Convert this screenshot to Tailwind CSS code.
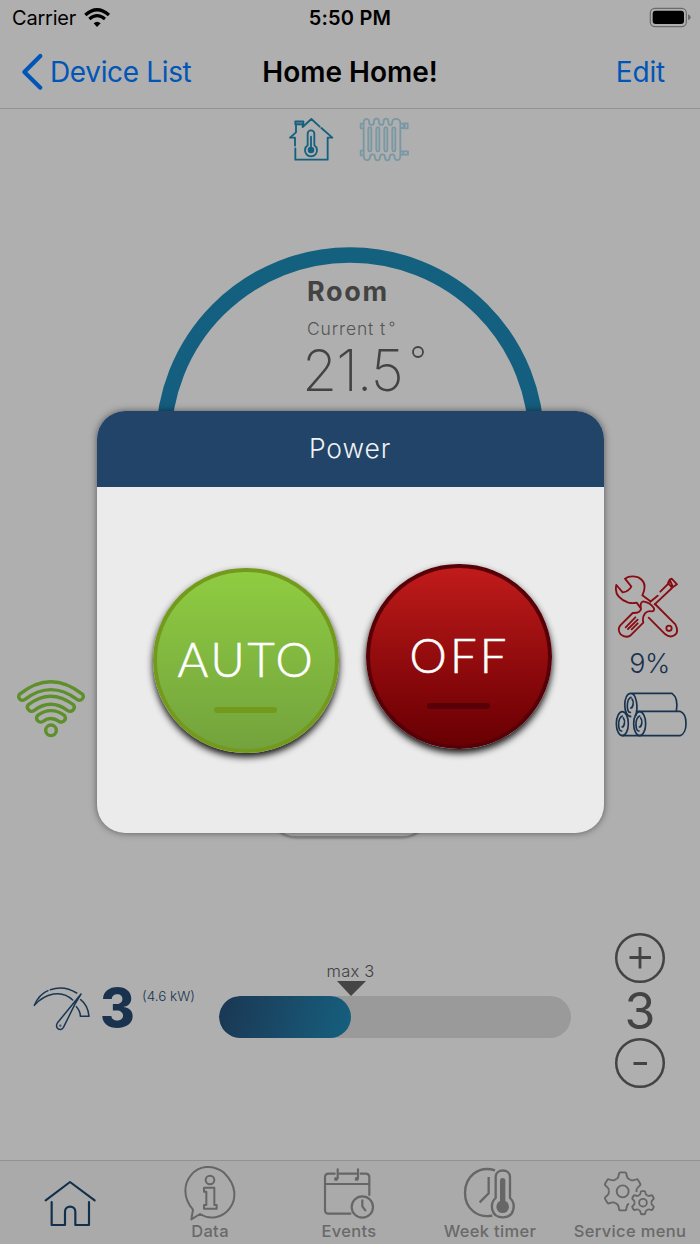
<!DOCTYPE html>
<html lang="en">
<head>
<meta charset="utf-8">
<title>Home Home!</title>
<script src="https://cdn.jsdelivr.net/npm/@tailwindcss/browser@4"></script>
</head>
<body class="bg-[#afafaf]">
<div class="relative flex h-[1244px] w-[700px] flex-col overflow-hidden bg-[#afafaf] font-['Inter',sans-serif] whitespace-nowrap">
  <header class="h-[109px] shrink-0 border-b border-[#929292] text-black">
    <div class="grid h-9 grid-cols-3 items-center">
      <div class="flex items-center pl-3 text-[20px] tracking-[-0.2px]"><span>Carrier</span>
        <svg class="-mt-0.5 ml-2" width="26" height="20" viewBox="252 18 78 60" fill="none" stroke="#000"><path d="M256 42Q291 11 327 42" stroke-width="10"/><path d="M268 54Q291 34 315 54" stroke-width="9"/><path d="M281 67Q291 57 302 67L291 78Z" fill="#000" stroke="none"/></svg>
      </div>
      <div class="text-center text-[20px] font-semibold tracking-[0.2px]">5:50 PM</div>
      <div class="flex justify-end pr-[9px]"><svg class="-mt-0.5" width="42" height="21" viewBox="897 20 126 63"><rect x="901" y="24" width="108" height="55" rx="14" fill="none" stroke="#6a6a6a" stroke-width="3.5"/><rect x="908" y="31" width="94" height="40" rx="9"/><path d="M1014 42Q1022 45 1022 51T1014 60Z" fill="#6a6a6a"/></svg></div>
    </div>
    <div class="grid h-[72px] grid-cols-3 items-center text-[28px]">
      <div class="flex items-center pl-[21px] text-[#0055b7]"><svg width="23" height="38" viewBox="63 158 69 114" fill="none" stroke="#0055b7" stroke-width="12.5" stroke-linecap="round" stroke-linejoin="round"><path d="M121 167L73 215L121 262"/></svg><span class="ml-[6px] tracking-[-0.35px]">Device List</span></div>
      <div class="text-center font-semibold tracking-[0px]">Home Home!</div>
      <div class="pr-[35px] text-right tracking-[-0.2px] text-[#0055b7]">Edit</div>
    </div>
  </header>

  <main class="h-[1051px] shrink-0">
    <div class="flex h-[138px] pt-1 pl-[284px]">
      <svg width="54" height="54" viewBox="42 24 162 162" fill="none" stroke="#14607f" stroke-width="5.5" stroke-linecap="round" stroke-linejoin="round"><path d="M149 65L124 42L98 66M154 69L187 98H173V164H76V130M75 122V98H60L78 82V58M98 66V58"/><path d="M76 49H100V58H76Z" fill="#5d8796"/><path d="M113 121V86a10 10 0 0 1 20 0V121a18 18 0 1 1-20 0Z"/><circle cx="123" cy="135" r="10" fill="#14607f" stroke="none"/><path d="M123 95V134"/></svg>
      <svg class="ml-[18px]" width="56" height="54" viewBox="258 24 168 162" fill="none" stroke="#7998a3" stroke-width="5.5" stroke-linejoin="round"><path d="M281 152V55C281 38 297 38 297 50C297 63 312 63 312 50C312 38 327 38 327 50C327 63 341 63 341 50C341 38 355 38 355 50C355 63 367 63 367 50C367 38 391 38 391 55V152C391 169 374 169 374 157C374 145 359 145 359 157C359 169 345 169 345 157C345 145 330 145 330 157C330 169 315 169 315 157C315 145 300 145 300 157C300 169 281 169 281 152Z"/><rect x="295" y="67" width="9" height="72" rx="4"/><rect x="319" y="67" width="9" height="72" rx="4"/><rect x="343" y="67" width="9" height="72" rx="4"/><rect x="367" y="67" width="9" height="72" rx="4"/><path d="M281 56H272V70H281M281 137H272V151H281M391 56H401V69H391M404 55H413V70H404ZM391 139H400V149H391M400 139H414V149H400Z"/></svg>
    </div>
    <div class="relative mx-auto h-[327px] w-[390px]">
      <svg class="absolute inset-0" width="390" height="327" viewBox="0 0 390 327"><defs><linearGradient id="ring" x1="0" y1="0" x2="0" y2="1"><stop offset="0" stop-color="#14607f"/><stop offset=".35" stop-color="#145f80"/><stop offset="1" stop-color="#173b58"/></linearGradient></defs><circle cx="195" cy="194.5" r="186.5" fill="none" stroke="url(#ring)" stroke-width="15.5"/></svg>
      <div class="relative flex flex-col pt-[28px] pl-[152px] text-[#434343]">
        <div class="h-[34px] text-[27px] leading-[34px] font-bold tracking-[1.7px]">Room</div>
        <div class="mt-[8px] flex h-6 text-[17.5px] leading-6 font-light tracking-[0.85px] text-[#555]">Current t<svg class="mt-1 ml-[3px]" width="6" height="6" viewBox="0 0 6 6"><circle cx="3" cy="3" r="2" fill="none" stroke="#555"/></svg></div>
        <div class="-ml-[5px] flex h-[60px] text-[57px] leading-[60px] font-extralight"><span class="w-[98px] tracking-[-1px]">21.5</span><svg class="mt-[4px] ml-[11px]" width="14" height="14" viewBox="0 0 14 14"><circle cx="7" cy="7" r="5" fill="none" stroke="#434343" stroke-width="1.8"/></svg></div>
      </div>
    </div>
    <div class="flex h-[208px] justify-between pr-[11px] pl-[14px]">
      <svg class="mt-[101px]" width="74" height="66" viewBox="42 15 222 198" fill="none" stroke="#5d8f2b" stroke-width="10"><path d="M58 73Q152 -3 248 73C254 83 243 96 231 88Q152 30 75 88C63 96 52 84 58 73Z"/><path d="M85 104Q152 53 220 104C229 115 215 130 202 121Q152 85 103 121C91 130 76 115 85 104Z"/><path d="M113 136Q153 108 193 136C203 149 187 161 177 154Q152 137 129 154C118 161 103 149 113 136Z"/><circle cx="153" cy="181" r="16"/></svg>
      <div class="flex w-[75px] flex-col items-center text-[#19334f]">
        <svg class="-ml-[6px]" width="75" height="64" viewBox="33 27 225 192" fill="none" stroke="#880d13" stroke-width="5.5" stroke-linecap="round" stroke-linejoin="round"><path d="M121 128L110 113Q99 116 85 113Q40 96 49 60L68 82Q86 80 94 65L75 41Q90 30 115 37Q145 53 127 91L151 109M165 117L226 178Q238 202 223 211Q210 219 196 208L146 158"/><circle cx="207" cy="190" r="8"/><path d="M151 110L173 92M164 118L216 69M181 80L207 54M204 54L209 44L215 41L231 58L216 68ZM209 44L217 62M130 109Q152 113 162 130Q164 139 154 139Q143 136 135 145Q126 157 130 173L91 212Q76 220 62 208Q51 193 61 181L98 144Q120 145 123 132Q119 111 130 109ZM77 187L106 157M84 192L113 164M95 193L113 175"/></svg>
        <div class="mt-[9px] -ml-[4px] h-[34px] text-[27px] leading-[34px] font-light tracking-[-0.5px]">9%</div>
        <svg class="mt-[10px]" width="75" height="48" viewBox="42 381 225 144" fill="none" stroke="#19334f" stroke-width="5"><path d="M92 388H216Q236 402 229 442M107 442H240C264 450 264 508 240 515H66M107 456C115 430 110 388 92 388C69 388 67 458 94 458"/><ellipse cx="67" cy="479" rx="18" ry="36"/><ellipse cx="119" cy="479" rx="18" ry="36"/><path d="M67 456C52 462 53 503 65 501M70 462C77 470 73 489 66 489M119 456C104 462 105 503 117 501M122 462C129 470 125 489 118 489M93 400C78 406 79 447 91 445M96 405C103 413 99 432 92 432" stroke-linecap="round"/></svg>
      </div>
    </div>
    <div class="h-[141px]"><div class="ml-[268px] h-[56px] w-[162px] rounded-[28px] border-2 border-[#858585] bg-[#afafaf] shadow-[0_1px_2px_#888]"></div></div>
    <div class="flex h-[170px] pt-[9px] pl-[30px]">
      <svg class="mt-[53px]" width="64" height="50" viewBox="30 105 192 150" fill="none" stroke="#193753" stroke-width="4.5" stroke-linecap="round" stroke-linejoin="round"><path d="M43 166C52 145 66 129 84 122M91 119C117 110 145 113 170 129M43 166C75 130 125 117 158 150M183 132L112 219C104 235 121 246 130 233L164 164L183 132M182 149Q204 166 207 199H181Q181 182 169 170"/><circle cx="121" cy="227" r="1"/></svg>
      <div class="mt-[46px] ml-[6px] w-[35px] text-[53px] leading-[60px] font-extrabold text-[#19334f]">3</div>
      <div class="mt-[54px] ml-[7px] w-[60px] text-[13.5px] leading-5 font-light text-[#19334f]">(4.6 kW)</div>
      <div class="ml-[17px] w-[352px]">
        <div class="flex h-[64px] flex-col items-center pr-[89px] text-[16.5px] font-light text-[#404040]"><div class="mt-[29px] h-[20px] leading-[20px] tracking-[0.2px]">max 3</div><svg width="30" height="15" viewBox="0 0 30 15"><path d="M1 0H30L15 15Z" fill="#454545"/></svg></div>
        <div class="h-[42px] overflow-hidden rounded-[21px] bg-[#9a9a9a]"><div class="h-full w-[132px] rounded-[21px] bg-linear-105 from-[#193753] to-[#14607f]"></div></div>
      </div>
      <div class="ml-[43px] flex w-[52px] flex-col items-center text-[#434343]">
        <svg width="52" height="52" viewBox="0 0 52 52" fill="none" stroke="#434343" stroke-width="2.5"><circle cx="26" cy="26" r="23.8"/><path d="M15.5 25.5H37M26 15V36.5" stroke-width="2.8"/></svg>
        <div class="h-[53px] text-[50px] leading-[54px] font-normal">3</div>
        <svg width="52" height="52" viewBox="0 0 52 52" fill="none" stroke="#434343" stroke-width="2.5"><circle cx="26" cy="26" r="23.8"/><path d="M19.5 26.5H33" stroke-width="3"/></svg>
      </div>
    </div>
  </main>

  <nav class="grid h-[84px] shrink-0 grid-cols-5 border-t border-[#929292] bg-[#aaaaaa] text-center text-[16.5px] leading-5 font-medium tracking-[0.35px] text-[#696969]">
    <div><svg width="140" height="83" viewBox="0 32 420 249" fill="none" stroke="#12304c" stroke-width="6.5" stroke-linecap="round" stroke-linejoin="round"><path d="M137 150L210 95L284 150M155 155V224H195V184C195 164 226 164 226 184V224H267V155"/></svg></div>
    <div><svg width="140" height="60" viewBox="420 31 420 180" fill="none" stroke="#666" stroke-width="6" stroke-linejoin="round"><path d="M579 177C515 102 598 10 672 66C750 143 665 231 600 190L574 206L579 177ZM612 111H643V163H650V174H612V163H619V123H612Z"/><circle cx="630" cy="88" r="13"/></svg><div>Data</div></div>
    <div><svg width="140" height="60" viewBox="842 32 420 180" fill="none" stroke="#666" stroke-width="6.5" stroke-linecap="round"><path d="M1110 134V81Q1110 70 1099 70H1084M1071 70H1021M1006 70H988Q977 70 977 81V179Q977 190 988 190H1053M977 101H1110M1015 57V84M1076 57V84"/><circle cx="1010" cy="86" r="6" fill="#666" stroke="none"/><circle cx="1072" cy="86" r="6" fill="#666" stroke="none"/><circle cx="1089" cy="170" r="32"/><path d="M1089 150V168L1098 180"/></svg><div class="-ml-0.5">Events</div></div>
    <div><svg width="140" height="60" viewBox="210 32 420 180" fill="none" stroke="#666" stroke-width="7"><path d="M435 60C386 45 345 78 345 128C345 176 384 204 427 196M416 80V129L389 156"/><path d="M437 143V80C437 54 480 54 480 80V143C498 159 495 201 459 201C421 201 419 159 437 143Z"/><circle cx="458" cy="169" r="19" fill="#666" stroke="none"/><path d="M458 91V168" stroke-width="16" stroke-linecap="round"/></svg><div>Week timer</div></div>
    <div><svg width="140" height="60" viewBox="630 32 420 180" fill="none" stroke="#666" stroke-width="5.5" stroke-linejoin="round"><defs><path id="tooth" d="M-19-37Q-13-39-11-52Q-11-57-6-57H6Q11-57 11-52Q13-39 19-37L22.5-35"/></defs><g transform="translate(818 123)"><use href="#tooth"/><use href="#tooth" transform="rotate(60)"/><use href="#tooth" transform="rotate(180)"/><use href="#tooth" transform="rotate(240)"/><use href="#tooth" transform="rotate(300)"/><circle r="18"/></g><g transform="translate(879 157) scale(.61)" stroke-width="9"><use href="#tooth"/><use href="#tooth" transform="rotate(60)"/><use href="#tooth" transform="rotate(120)"/><use href="#tooth" transform="rotate(180)"/><use href="#tooth" transform="rotate(240)"/><use href="#tooth" transform="rotate(300)"/><circle r="19"/></g></svg><div>Service menu</div></div>
  </nav>

  <section class="absolute top-[411px] left-[96.5px] h-[422px] w-[507px] overflow-hidden rounded-[28px] bg-[#ebebeb] shadow-[0_0_7px_rgba(0,0,0,0.5)]">
    <h2 class="flex h-[76px] items-center justify-center bg-[#224468] text-[26.5px] font-light tracking-[0.9px] text-[#f0f2f4]">Power</h2>
    <div class="flex pt-[77px] pl-[56px]">
      <div class="mt-1 flex h-[185px] w-[186px] flex-col items-center rounded-full border-4 border-[#739a1c] bg-linear-to-b from-[#8fcc41] to-[#73a33d] shadow-[0_4px_7px_#111]">
        <div class="mt-[57px] h-[60px] pl-[2px] font-['Lato'] text-[47px] leading-[60px] font-light tracking-[2.8px] text-white [-webkit-text-stroke:0.6px_white]">AUTO</div><div class="mt-[18px] h-1.5 w-[63px] rounded-full bg-[#739a1c]"></div>
      </div>
      <div class="ml-[27px] flex h-[185px] w-[186px] flex-col items-center rounded-full border-4 border-[#570008] bg-linear-to-b from-[#c11b1b] to-[#690003] shadow-[0_4px_7px_#111]">
        <div class="mt-[57px] h-[60px] pl-[2px] font-['Lato'] text-[47px] leading-[60px] font-light tracking-[3.2px] text-white [-webkit-text-stroke:0.6px_white]">OFF</div><div class="mt-[18px] h-1.5 w-[63px] rounded-full bg-[#570008]"></div>
      </div>
    </div>
  </section>
</div>
</body>
</html>
